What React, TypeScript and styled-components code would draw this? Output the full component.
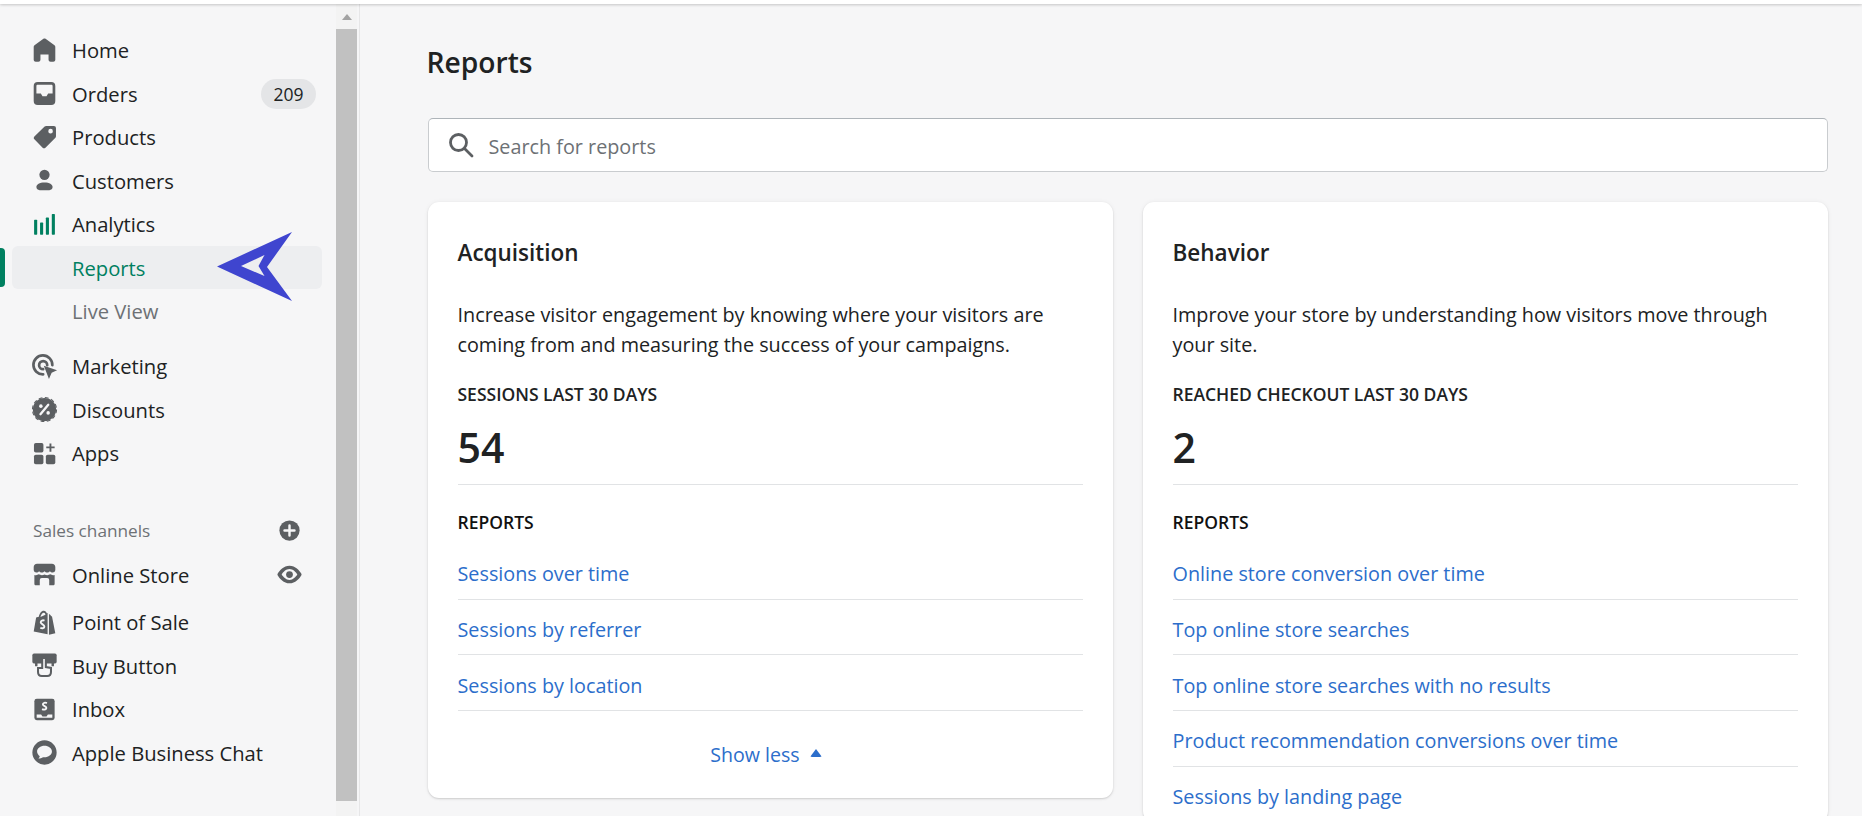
import styled, { createGlobalStyle } from "styled-components";
import type { ReactNode } from "react";

const GlobalStyle = createGlobalStyle`
  html, body {
    margin: 0;
    padding: 0;
    height: 100%;
    background: #f6f6f7;
    color: #202223;
    font-family: "Open Sans", "Noto Sans", "Liberation Sans", sans-serif;
  }
  * { box-sizing: border-box; }
`;

const Page = styled.div`
  height: 816px;
  display: flex;
  flex-direction: column;
  overflow: hidden;
`;

const TopEdge = styled.div`
  height: 4px;
  flex: none;
  background: #fff;
  box-shadow: 0 1px 3px rgba(0, 0, 0, 0.2);
  position: relative;
`;

const Body = styled.div`
  flex: 1;
  display: flex;
  min-height: 0;
`;

const Sidebar = styled.aside`
  width: 360px;
  flex: none;
  display: flex;
  border-right: 1px solid #e6e6e7;
`;

const Nav = styled.nav`
  flex: 1;
  padding-top: 24.4px;
  display: flex;
  flex-direction: column;
`;

const Group = styled.div<{ $top?: number }>`
  display: flex;
  flex-direction: column;
  margin-top: ${(p) => p.$top ?? 0}px;
`;

const Row = styled.div<{ $active?: boolean }>`
  position: relative;
  height: 43.5px;
  margin: 0 14px 0 12px;
  padding-left: 19px;
  display: flex;
  align-items: center;
  gap: 14px;
  border-radius: 6px;
  background: ${(p) => (p.$active ? "#edeef0" : "transparent")};
`;

const Label = styled.span<{ $tone?: "green" | "muted" }>`
  flex: 1;
  font-size: 20.2px;
  font-weight: 500;
  color: ${(p) =>
    p.$tone === "green" ? "#008060" : p.$tone === "muted" ? "#6d7175" : "#202223"};
`;

const IconSlot = styled.span`
  width: 27px;
  height: 27px;
  flex: none;
  display: flex;
  svg {
    display: block;
    width: 100%;
    height: 100%;
  }
`;

const SubSpacer = styled.span`
  width: 27px;
  flex: none;
`;

const Badge = styled.span`
  height: 30px;
  width: 55px;
  margin-right: 6px;
  border-radius: 15px;
  background: #e4e5e7;
  font-size: 17.5px;
  line-height: 30px;
  text-align: center;
  color: #202223;
`;

const Trailing = styled(IconSlot)`
  margin-right: 19px;
`;

const ActiveMark = styled.span`
  position: absolute;
  left: -12px;
  top: 2px;
  bottom: 2px;
  width: 5px;
  background: #008060;
  border-radius: 0 4px 4px 0;
`;

const ArrowMark = styled.svg`
  position: absolute;
  left: 205px;
  top: -14px;
  width: 75px;
  height: 69px;
`;

const SectionHead = styled.div`
  height: 44.5px;
  margin: 0 14px 0 33px;
  display: flex;
  align-items: center;
  justify-content: space-between;
  font-size: 17.2px;
  color: #6d7175;
`;

const PlusSlot = styled(IconSlot)`
  margin-right: 19px;
`;

const Scrollbar = styled.div`
  width: 21px;
  flex: none;
  margin-right: 2px;
  padding-bottom: 15px;
  display: flex;
  flex-direction: column;
  align-items: center;
  background: #f3f3f3;
`;

const ScrollUp = styled.div`
  height: 25px;
  flex: none;
  display: flex;
  align-items: center;
  &::before {
    content: "";
    border-left: 5.5px solid transparent;
    border-right: 5.5px solid transparent;
    border-bottom: 6px solid #a3a3a3;
  }
`;

const ScrollThumb = styled.div`
  flex: 1;
  width: 100%;
  background: #c1c1c1;
`;

const Main = styled.main`
  flex: 1;
  min-width: 0;
  padding: 0 34px 0 67.5px;
`;

const Title = styled.h1`
  margin: 0 0 0 -1px;
  height: 114px;
  padding-top: 38px;
  font-size: 28.2px;
  line-height: 40px;
  font-weight: 600;
  color: #202223;
`;

const Search = styled.label`
  height: 54px;
  display: flex;
  align-items: center;
  gap: 15px;
  padding-left: 19px;
  background: #fff;
  border: 1px solid #c9cccf;
  border-top-color: #aeb4b9;
  border-radius: 5px;
`;

const SearchInput = styled.input`
  flex: 1;
  border: 0;
  outline: 0;
  padding: 2px 0 0;
  background: transparent;
  font: inherit;
  font-size: 19.8px;
  color: #202223;
  &::placeholder {
    color: #6d7175;
    opacity: 1;
  }
`;

const Cards = styled.div`
  margin-top: 30px;
  display: grid;
  grid-template-columns: 685px 685px;
  gap: 30px;
  align-items: start;
`;

const Card = styled.section`
  background: #fff;
  border-radius: 11px;
  padding: 36px 30px 0;
  box-shadow: 0 0 5px rgba(23, 24, 24, 0.05), 0 1px 2px rgba(0, 0, 0, 0.15);
`;

const CardTitle = styled.h2`
  margin: 0;
  font-size: 22.5px;
  line-height: 30px;
  font-weight: 600;
`;

const Blurb = styled.p`
  margin: 32px 0 0;
  font-size: 19.8px;
  line-height: 30px;
`;

const MetricLabel = styled.div`
  margin-top: 22px;
  font-size: 17.5px;
  line-height: 24px;
  font-weight: 600;
  text-transform: uppercase;
`;

const Metric = styled.div`
  margin-top: 13px;
  height: 66px;
  font-size: 41px;
  line-height: 56px;
  font-weight: 600;
  border-bottom: 1px solid #e1e3e5;
`;

const ReportsHead = styled(MetricLabel)`
  margin-top: 25px;
  color: #111;
`;

const LinkList = styled.ul`
  list-style: none;
  margin: 10px 0 0;
  padding: 0;
`;

const LinkRow = styled.li`
  height: 55.7px;
  padding-top: 15.4px;
  border-bottom: 1px solid #e1e3e5;
  font-size: 19.8px;
  line-height: 30px;
`;

const ReportLink = styled.a`
  color: #2c6ecb;
  text-decoration: none;
`;

const ShowMore = styled.div`
  height: 87px;
  padding-right: 8px;
  display: flex;
  align-items: center;
  justify-content: center;
  gap: 10px;
  font-size: 19.6px;
  color: #2c6ecb;
  &::after {
    content: "";
    margin-top: -4px;
    border-left: 6px solid transparent;
    border-right: 6px solid transparent;
    border-bottom: 8px solid #2c6ecb;
    border-radius: 2px;
  }
`;

const GREY = "#5c5f62";
const BG = "#f6f6f7";

const Svg = ({ children, color = GREY }: { children: ReactNode; color?: string }) => (
  <svg viewBox="0 0 20 20" fill={color} stroke="none">
    {children}
  </svg>
);

const icons: Record<string, ReactNode> = {
  home: (
    <Svg>
      <path d="M18 7.3V16.800c0 .8-.7 1.500-1.500 1.500h-2c-.8 0-1.500-.7-1.500-1.500V13H7v3.800c0 .8-.7 1.500-1.500 1.500h-2c-.8 0-1.500-.7-1.500-1.500V7.300c0-.5.2-.9.6-1.200l6.600-4.800c.5-.3 1.100-.3 1.600 0l6.600 4.800c.4.3.6.7.6 1.200z" />
    </Svg>
  ),
  orders: (
    <Svg>
      <path
        fillRule="evenodd"
        d="M5 1.500h10A3 3 0 0 1 18 4.500v11a3 3 0 0 1-3 3H5a3 3 0 0 1-3-3v-11a3 3 0 0 1 3-3zM5 3.500c-.6 0-1 .4-1 1V10h3.300l1.200 2h3l1.200-2H16V4.500c0-.6-.4-1-1-1z"
      />
    </Svg>
  ),
  products: (
    <Svg>
      <path d="M17 1.500h-5.800c-.4 0-.8.200-1.100.4l-7.600 7.300c-.6.600-.6 1.500 0 2.100l6.100 6.200c.6.600 1.500.6 2.100 0l7.400-7.300c.3-.3.400-.7.400-1.100V3a1.500 1.500 0 0 0-1.500-1.500zM14.500 7a1.700 1.700 0 1 1 0-3.400 1.700 1.700 0 0 1 0 3.400z" />
    </Svg>
  ),
  customers: (
    <Svg>
      <circle cx="10" cy="5.800" r="3.800" />
      <path d="M10 11.500c-3.700 0-6 1.400-6 3.400 0 1.300 1 2.300 2.400 2.300h7.200c1.400 0 2.400-1 2.400-2.300 0-2-2.300-3.400-6-3.400z" />
    </Svg>
  ),
  analytics: (
    <Svg color="#008060">
      <rect x="2.300" y="6.500" width="2.300" height="11" rx=".5" />
      <rect x="6.700" y="8.500" width="2.300" height="9" rx=".5" />
      <rect x="11" y="4.800" width="2.300" height="12.700" rx=".5" />
      <rect x="15.400" y="2.300" width="2.300" height="15.200" rx=".5" />
    </Svg>
  ),
  marketing: (
    <Svg>
      <path
        d="M15.800 9A7 7 0 1 0 9 15.800M12 9a3 3 0 1 0-3 3"
        fill="none"
        stroke={GREY}
        strokeWidth="2"
        strokeLinecap="round"
      />
      <path d="M9.500 9.500l9.800 3.300-4 1.900-2 4.500z" />
    </Svg>
  ),
  discounts: (
    <Svg>
      <circle cx="10" cy="10" r="8.600" />
      <circle cx="10" cy="10" r="8.900" fill="none" stroke={GREY} strokeWidth=".8" strokeDasharray="2.800 1.860" />
      <path d="M12.800 6.500L7 13.500" stroke={BG} strokeWidth="1.700" strokeLinecap="round" />
      <circle cx="7.300" cy="7.500" r="1.300" fill={BG} />
      <circle cx="12.700" cy="12.500" r="1.300" fill={BG} />
    </Svg>
  ),
  apps: (
    <Svg>
      <rect x="2.200" y="2.300" width="7" height="7" rx="1.300" />
      <rect x="2.200" y="11" width="7" height="7" rx="1.300" />
      <rect x="11" y="11" width="7" height="7" rx="1.300" />
      <path d="M13.700 2.500h1.400v2.300h2.400v1.400h-2.400v2.500h-1.400V6.200h-2.400V4.800h2.400z" />
    </Svg>
  ),
  onlineStore: (
    <Svg>
      <path d="M4.500 2h11c1.500 0 2.500 1.200 2.500 2.500v2.300a2 2 0 0 1-2 1.700c-.8 0-1.500-.4-2-1-.5.600-1.200 1-2 1s-1.500-.4-2-1c-.5.600-1.200 1-2 1s-1.500-.4-2-1c-.5.600-1.200 1-2 1a2 2 0 0 1-2-1.700V4.500C2 3.200 3 2 4.500 2z" />
      <path d="M2.500 10.300c1.100.3 2.300.2 3.200-.4 1.400.7 3 .8 4.300.1 1.400.7 3 .7 4.300-.1.900.6 2.100.7 3.200.4v6.500c0 .7-.5 1.200-1.200 1.200H13.500v-4a1.500 1.500 0 0 0-1.500-1.500H8a1.500 1.500 0 0 0-1.500 1.500v4H3.700c-.7 0-1.200-.5-1.200-1.200z" />
    </Svg>
  ),
  pos: (
    <Svg>
      <path d="M3.800 6.300l2-.6C6.300 3.300 7.600 1.300 9.500 1.300c1.100 0 1.800.8 2.200 1.800l.6-.2v15.800l-10.300-2z" />
      <path d="M13.300 3.800c.5 0 1 .2 1.300 1l1 .9 2.400 12.300-4.700 1z" />
      <path d="M7 6c.4-2 1.400-3.300 2.500-3.300.7 0 1.100.5 1.200 1.500z" fill={BG} />
      <path
        d="M10 8.600c-1.300-.6-2.800 0-2.800 1.200 0 1.500 2.700 1.600 2.700 3.100 0 1.300-1.500 1.800-3 1"
        fill="none"
        stroke={BG}
        strokeWidth="1.400"
      />
    </Svg>
  ),
  buyButton: (
    <Svg>
      <rect x="1" y="1.200" width="18" height="7.300" rx="1.200" />
      <path d="M3 8v2.500h1.800V8zM15.200 8v2.500H17V8z" />
      <path
        d="M8.300 5.200v6.600H5.200v3c0 1.700 1 3 2.800 3h4c1.800 0 2.800-1.300 2.800-3v-3l-3.800-.6V5.200c0-1.200-2.700-1.200-2.700 0z"
        fill={BG}
        stroke={GREY}
        strokeWidth="1.500"
      />
    </Svg>
  ),
  inbox: (
    <Svg>
      <rect x="2.500" y="2" width="15" height="16" rx="1.800" />
      <path d="M4.200 13.700h3.300l1 1.500h3l1-1.500h3.300v2.500H4.200z" fill={BG} />
      <path
        d="M11.800 5.300c-1.300-.7-3-.3-3 .9 0 1.400 2.600 1.300 2.600 2.700 0 1.200-1.800 1.500-3.200.8"
        fill="none"
        stroke={BG}
        strokeWidth="1.400"
      />
    </Svg>
  ),
  chat: (
    <Svg>
      <path
        fillRule="evenodd"
        d="M10 1a9 9 0 1 1 0 18 9 9 0 0 1 0-18zM10 5c-3 0-5.500 1.900-5.500 4.300 0 1.400.8 2.600 2 3.400-.1.700-.5 1.300-1 1.800 1.300 0 2.500-.4 3.400-1 .4.100.7.100 1.100.1 3 0 5.500-1.900 5.500-4.300S13 5 10 5z"
      />
    </Svg>
  ),
};

const PlusIcon = () => (
  <Svg>
    <circle cx="10" cy="10" r="7.500" />
    <path d="M10 6.300v7.400M6.300 10h7.400" stroke={BG} strokeWidth="1.800" strokeLinecap="round" />
  </Svg>
);

const EyeIcon = () => (
  <Svg>
    <path
      fillRule="evenodd"
      d="M10 3.500c4.300 0 7.400 3.600 8.800 6 .2.300.2.700 0 1-1.400 2.400-4.500 6-8.800 6s-7.400-3.600-8.800-6c-.2-.3-.2-.7 0-1C2.600 7.100 5.700 3.500 10 3.500zM10 6c-2.600 0-4.700 2.300-5.800 4 1.100 1.700 3.200 4 5.800 4s4.700-2.300 5.800-4C14.700 8.300 12.600 6 10 6z"
    />
    <circle cx="10" cy="10" r="2.500" />
  </Svg>
);

const SearchIcon = () => (
  <svg width="26" height="26" viewBox="0 0 26 26" fill="none" stroke={GREY} strokeWidth="2.800" strokeLinecap="round">
    <circle cx="10.500" cy="10.500" r="8" />
    <path d="M16.500 16.500L24 24" />
  </svg>
);

const ArrowShape = () => (
  <ArrowMark viewBox="0 0 75 69">
    <path
      fillRule="evenodd"
      fill="#3f45cf"
      d="M0 34.500L75 0 50 35l25 34zM24 34l23.500 10-6-10 6-11z"
    />
  </ArrowMark>
);

const acquisitionLinks = ["Sessions over time", "Sessions by referrer", "Sessions by location"];
const behaviorLinks = [
  "Online store conversion over time",
  "Top online store searches",
  "Top online store searches with no results",
  "Product recommendation conversions over time",
  "Sessions by landing page",
];

const NavRow = ({ icon, label, children }: { icon: string; label: string; children?: ReactNode }) => (
  <Row>
    <IconSlot>{icons[icon]}</IconSlot>
    <Label>{label}</Label>
    {children}
  </Row>
);

const ReportCard = ({
  title,
  blurb,
  metricLabel,
  metric,
  links,
  footer,
}: {
  title: string;
  blurb: string;
  metricLabel: string;
  metric: string;
  links: string[];
  footer?: string;
}) => (
  <Card>
    <CardTitle>{title}</CardTitle>
    <Blurb>{blurb}</Blurb>
    <MetricLabel>{metricLabel}</MetricLabel>
    <Metric>{metric}</Metric>
    <ReportsHead>Reports</ReportsHead>
    <LinkList>
      {links.map((link) => (
        <LinkRow key={link}>
          <ReportLink href="#">{link}</ReportLink>
        </LinkRow>
      ))}
    </LinkList>
    {footer && <ShowMore>{footer}</ShowMore>}
  </Card>
);

const App = () => {
  return (
    <Page>
      <GlobalStyle />
      <TopEdge />
      <Body>
        <Sidebar>
          <Nav>
            <Group>
              <NavRow icon="home" label="Home" />
              <NavRow icon="orders" label="Orders">
                <Badge>209</Badge>
              </NavRow>
              <NavRow icon="products" label="Products" />
              <NavRow icon="customers" label="Customers" />
              <NavRow icon="analytics" label="Analytics" />
              <Row $active>
                <ActiveMark />
                <SubSpacer />
                <Label $tone="green">Reports</Label>
                <ArrowShape />
              </Row>
              <Row>
                <SubSpacer />
                <Label $tone="muted">Live View</Label>
              </Row>
            </Group>
            <Group $top={11.5}>
              <NavRow icon="marketing" label="Marketing" />
              <NavRow icon="discounts" label="Discounts" />
              <NavRow icon="apps" label="Apps" />
            </Group>
            <Group $top={33.8}>
              <SectionHead>
                Sales channels
                <PlusSlot>
                  <PlusIcon />
                </PlusSlot>
              </SectionHead>
              <NavRow icon="onlineStore" label="Online Store">
                <Trailing>
                  <EyeIcon />
                </Trailing>
              </NavRow>
            </Group>
            <Group $top={4}>
              <NavRow icon="pos" label="Point of Sale" />
              <NavRow icon="buyButton" label="Buy Button" />
              <NavRow icon="inbox" label="Inbox" />
              <NavRow icon="chat" label="Apple Business Chat" />
            </Group>
          </Nav>
          <Scrollbar>
            <ScrollUp />
            <ScrollThumb />
          </Scrollbar>
        </Sidebar>
        <Main>
          <Title>Reports</Title>
          <Search>
            <SearchIcon />
            <SearchInput placeholder="Search for reports" />
          </Search>
          <Cards>
            <ReportCard
              title="Acquisition"
              blurb="Increase visitor engagement by knowing where your visitors are coming from and measuring the success of your campaigns."
              metricLabel="Sessions last 30 days"
              metric="54"
              links={acquisitionLinks}
              footer="Show less"
            />
            <ReportCard
              title="Behavior"
              blurb="Improve your store by understanding how visitors move through your site."
              metricLabel="Reached checkout last 30 days"
              metric="2"
              links={behaviorLinks}
            />
          </Cards>
        </Main>
      </Body>
    </Page>
  );
};

export default App;
